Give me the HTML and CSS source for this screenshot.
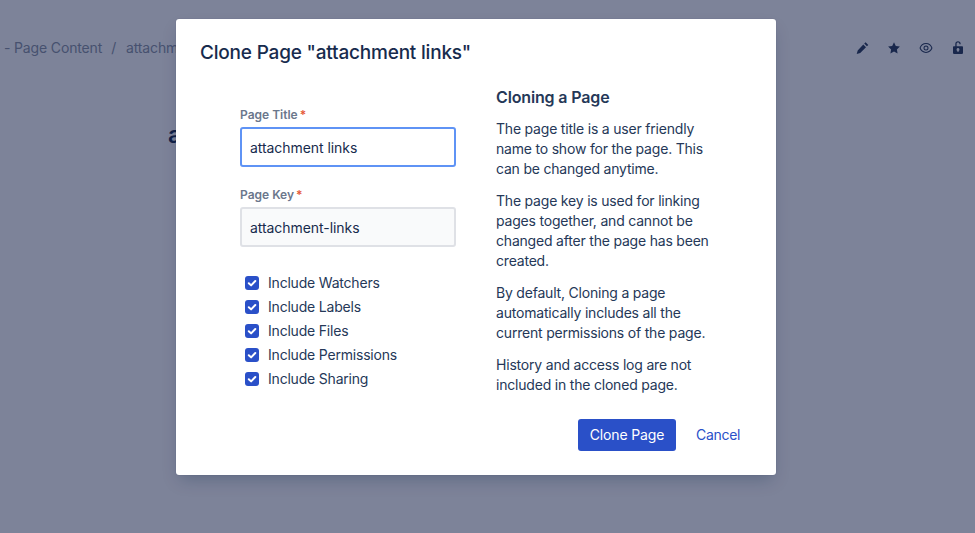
FILE: index.html
```html
<!DOCTYPE html>
<html lang="en">
<head>
<meta charset="utf-8">
<title>Clone Page</title>
<link rel="stylesheet" href="styles.css">
</head>
<body>
<div class="page">
  <header class="topbar">
    <div class="crumbs"><span>- Page Content</span><span class="sep">/</span><span>attachment links</span></div>
    <div class="tools">
      <svg class="tool" viewBox="0 0 16 16"><path d="M11.600 2.200l2.700 2.700-1.400 1.400-2.700-2.700zM9.300 4.500l2.700 2.700-5.800 5.800-3.500 1 1-3.500z"/></svg>
      <svg class="tool" viewBox="0 0 16 16"><path d="M8 2.200l1.800 3.700 4.100.6-3 2.900.7 4.100L8 11.600l-3.600 1.900.7-4.100-3-2.900 4.100-.6z"/></svg>
      <svg class="tool" viewBox="0 0 16 16"><path fill-rule="evenodd" d="M8 3.100c3.100 0 5.600 2 6.500 4.900-.9 2.900-3.400 4.900-6.500 4.900S2.400 10.900 1.500 8C2.400 5.100 4.900 3.100 8 3.100zm0 1C5.600 4.100 3.500 5.700 2.600 8c.9 2.300 3 3.900 5.400 3.900s4.500-1.600 5.400-3.900C12.500 5.700 10.400 4.100 8 4.100zm0 1.400a2.500 2.500 0 1 1 0 5 2.500 2.500 0 0 1 0-5zm0 1a1.500 1.500 0 1 0 0 3 1.500 1.500 0 0 0 0-3z"/></svg>
      <svg class="tool" viewBox="0 0 16 16"><path fill-rule="evenodd" d="M8 1.200c1.600 0 2.700 1.100 2.700 2.700v.4H9.400v-.4C9.400 3 8.800 2.500 8 2.500S6.600 3 6.600 3.900v2.300h5.600c.5 0 .8.300.8.800v6.100c0 .5-.3.800-.8.800H3.800c-.5 0-.8-.3-.8-.8V7c0-.5.300-.8.800-.8h1.500V3.900C5.300 2.300 6.400 1.200 8 1.200zm0 6.900a1.500 1.500 0 0 0-.7 2.800v.9h1.400v-.9A1.500 1.500 0 0 0 8 8.100z"/></svg>
    </div>
  </header>
  <h1 class="page-title">attachment links</h1>
</div>
<div class="scrim"></div>
<section class="modal">
  <h2 class="modal-title">Clone Page "attachment links"</h2>
  <div class="modal-body">
    <form class="form">
      <label class="field">
        <span class="label">Page Title<b>*</b></span>
        <span class="input focused">attachment links</span>
      </label>
      <label class="field">
        <span class="label">Page Key<b>*</b></span>
        <span class="input disabled">attachment-links</span>
      </label>
      <ul class="checks">
        <li><span class="box"><svg viewBox="0 0 14 14"><path d="M3.800 7.200l2.300 2.200 4.200-4.400"/></svg></span>Include Watchers</li>
        <li><span class="box"><svg viewBox="0 0 14 14"><path d="M3.800 7.200l2.300 2.200 4.200-4.400"/></svg></span>Include Labels</li>
        <li><span class="box"><svg viewBox="0 0 14 14"><path d="M3.800 7.200l2.300 2.200 4.200-4.400"/></svg></span>Include Files</li>
        <li><span class="box"><svg viewBox="0 0 14 14"><path d="M3.800 7.200l2.300 2.200 4.200-4.400"/></svg></span>Include Permissions</li>
        <li><span class="box"><svg viewBox="0 0 14 14"><path d="M3.800 7.200l2.300 2.200 4.200-4.400"/></svg></span>Include Sharing</li>
      </ul>
    </form>
    <aside class="help">
      <h3>Cloning a Page</h3>
      <p>The page title is a user friendly name to show for the page. This can be changed anytime.</p>
      <p>The page key is used for linking pages together, and cannot be changed after the page has been created.</p>
      <p>By default, Cloning a page automatically includes all the current permissions of the page.</p>
      <p>History and access log are not included in the cloned page.</p>
    </aside>
  </div>
  <footer class="actions">
    <button class="primary" type="button">Clone Page</button>
    <button class="link" type="button">Cancel</button>
  </footer>
</section>
</body>
</html>
```
FILE: styles.css
```css
* { box-sizing: border-box; }
html, body { margin: 0; height: 100%; overflow: hidden; }
body { font-family: Inter, "Liberation Sans", sans-serif; color: #172b4d; background: #fff; }
.page { height: 533px; }
.topbar { display: flex; justify-content: space-between; align-items: center; padding: 38px 9px 0 4px; height: 58px; }
.crumbs { display: flex; gap: 9px; width: 172px; overflow: hidden; font-size: 14px; line-height: 20px; letter-spacing: -.15px; color: #8993a4; white-space: nowrap; }
.sep { margin-right: 1px; }
.tools { display: flex; gap: 16px; }
.tool { width: 16px; height: 16px; fill: #253858; }
.page-title { width: 10px; overflow: hidden; white-space: nowrap; margin: 62px 0 0 168px; font-size: 24px; line-height: 30px; font-weight: 600; color: #172b4d; }
.scrim { position: absolute; inset: 0; background: rgba(15, 25, 66, .54); }
.modal { position: absolute; left: 176px; top: 19px; width: 600px; height: 456px; background: #fff; border-radius: 3px; padding: 21px 36px 0 24px; box-shadow: 0 0 1px rgba(9,30,66,.31), 0 8px 16px -4px rgba(9,30,66,.25); }
.modal-title { margin: 0; font-size: 19px; line-height: 26px; font-weight: 500; letter-spacing: -.2px; color: #172b4d; }
.modal-body { display: flex; margin-top: 21px; }
.form { width: 256px; margin-left: 40px; flex: none; padding-top: 20px; }
.field { display: block; margin-bottom: 20px; }
.label { display: block; font-size: 12px; line-height: 16px; font-weight: 600; color: #6b778c; margin-bottom: 4px; }
.label b { color: #e5593a; font-weight: 600; margin-left: 2px; }
.input { display: block; width: 216px; height: 40px; border: 2px solid #dfe1e6; border-radius: 3px; padding: 1px 8px 0; font-size: 14px; line-height: 36px; letter-spacing: -.06px; color: #172b4d; }
.input.focused { border-color: #5f93f5; background: #fff; }
.input.disabled { background: #f9fafb; }
.checks { list-style: none; margin: 23px 0 0 5px; padding: 0; }
.checks li { display: flex; align-items: center; height: 24px; font-size: 14px; letter-spacing: -.2px; color: #253858; }
.box { width: 14px; height: 14px; border-radius: 3px; background: #2a50c8; margin: 1px 9px 0 0; display: block; flex: none; }
.box svg { display: block; width: 14px; height: 14px; fill: none; stroke: #fff; stroke-width: 2; stroke-linecap: round; stroke-linejoin: round; }
.help { width: 232px; flex: none; }
.help h3 { margin: 0 0 12px; font-size: 16px; line-height: 20px; font-weight: 600; letter-spacing: -.15px; color: #253858; }
.help p { margin: 0 0 12px; font-size: 14px; line-height: 20px; letter-spacing: -.2px; color: #253858; }
.help p:last-child { margin-bottom: 0; }
.actions { display: flex; justify-content: flex-end; align-items: center; margin-top: 24px; }
.primary, .link { font: inherit; font-size: 14px; letter-spacing: -.15px; border: 0; cursor: pointer; height: 32px; border-radius: 3px; padding: 0 0 2px; }
.primary { width: 98px; background: #2a50c8; color: #fff; }
.link { background: none; color: #2a50c8; width: 64px; padding-left: 20px; text-align: left; letter-spacing: -.3px; }
```
